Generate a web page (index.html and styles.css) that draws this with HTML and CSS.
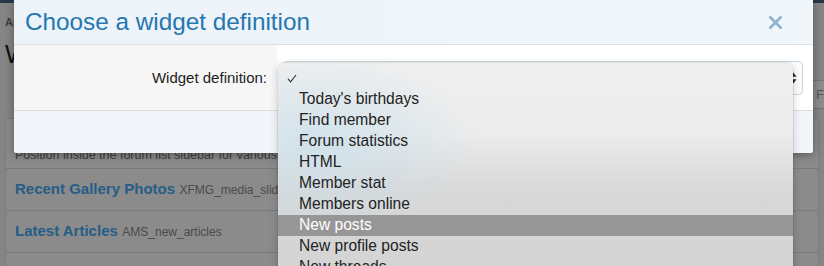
FILE: index.html
```html
<!DOCTYPE html>
<html>
<head>
<meta charset="utf-8">
<link rel="stylesheet" href="styles.css">
</head>
<body>
<div class="page">
  <div class="topbar"></div>
  <div class="crumb">Appearance</div>
  <h1 class="title">Widgets</h1>
  <div class="filter-row"><div class="filter">Filter...</div></div>
  <div class="block">
    <div class="row row-first">
      <div class="row-title">Forum list sidebar</div>
      <div class="row-desc">Position inside the forum list sidebar for various statistics widgets</div>
    </div>
    <div class="row"><span class="row-name">Recent Gallery Photos</span> <span class="row-id">XFMG_media_slider</span></div>
    <div class="row"><span class="row-name">Latest Articles</span> <span class="row-id">AMS_new_articles</span></div>
    <div class="row"><span class="row-name">New threads</span> <span class="row-id">forum_overview_new_threads</span></div>
  </div>
</div>

<div class="modal">
  <div class="m-head">
    <h2 class="m-title">Choose a widget definition</h2>
    <svg class="m-close" width="15" height="15" viewBox="0 0 15 15"><path d="M1.5 1.5 L13.5 13.5 M13.5 1.5 L1.5 13.5" stroke="#8db3d5" stroke-width="2.8" stroke-linecap="butt"/></svg>
  </div>
  <div class="m-row">
    <div class="m-label">Widget definition:</div>
    <div class="m-input">
      <div class="select">
        <svg class="sel-arrows" width="7" height="12" viewBox="0 0 7 12"><path d="M3.5 0.5 L6.5 4.8 L0.5 4.8 Z M3.5 11.5 L6.5 7.2 L0.5 7.2 Z" fill="#2a2a2a"/></svg>
      </div>
    </div>
  </div>
  <div class="m-foot"></div>
</div>

<div class="menu">
  <div class="menu-item menu-check"><svg width="10" height="9" viewBox="0 0 10 9"><path d="M1 4.8 L3.6 7.8 L9 1" fill="none" stroke="#333" stroke-width="1.1"/></svg></div>
  <div class="menu-item">Today's birthdays</div>
  <div class="menu-item">Find member</div>
  <div class="menu-item">Forum statistics</div>
  <div class="menu-item">HTML</div>
  <div class="menu-item">Member stat</div>
  <div class="menu-item">Members online</div>
  <div class="menu-item menu-hl">New posts</div>
  <div class="menu-item">New profile posts</div>
  <div class="menu-item">New threads</div>
</div>
</body>
</html>
```

FILE: styles.css
```css
html, body {
  margin: 0;
  padding: 0;
}
body {
  width: 824px;
  height: 266px;
  overflow: hidden;
  background: #858585;
  font-family: "Liberation Sans", Arial, sans-serif;
  position: relative;
}

/* dimmed background page */
.page {
  padding: 0 5px;
}
.topbar {
  height: 3px;
  margin: 0 -5px;
  background: #27384a;
}
.crumb {
  margin-top: 12px;
  font-size: 11px;
  line-height: 14px;
  font-weight: bold;
  color: #3c3c3c;
}
.title {
  margin: 10px 0 0;
  font-size: 25px;
  line-height: 30px;
  font-weight: normal;
  color: #111;
}
.filter-row {
  display: flex;
  justify-content: flex-end;
  margin-top: 11px;
  margin-right: -180px;
}
.filter {
  width: 182px;
  height: 27px;
  border: 1px solid #747474;
  border-radius: 3px;
  background: #8c8c8c;
  color: #555;
  font-size: 13px;
  line-height: 27px;
  padding-left: 4px;
}
.block {
  margin-top: 9px;
  border: 1px solid #7a7a7a;
  border-bottom: none;
  background: #8b8b8b;
}
.row {
  box-sizing: border-box;
  height: 42px;
  padding: 10px 9px 0;
  line-height: 20px;
  border-bottom: 1px solid #7a7a7a;
  white-space: nowrap;
  overflow: hidden;
}
.row-first {
  height: 50px;
  padding: 8px 9px 0;
}
.row-title {
  font-size: 15px;
  font-weight: bold;
  color: #265a82;
  line-height: 19px;
}
.row-desc {
  font-size: 12.5px;
  line-height: 18px;
  color: #3e3e3e;
}
.row-name {
  font-size: 15px;
  font-weight: bold;
  color: #265d87;
}
.row-id {
  font-size: 12px;
  color: #4a4a4a;
}

/* modal overlay */
.modal {
  position: absolute;
  left: 14px;
  top: 0;
  width: 799px;
  background: #fff;
  box-shadow: 0 2px 10px rgba(0, 0, 0, 0.35);
  border-radius: 0 0 3px 3px;
}
.m-head {
  height: 44px;
  border-bottom: 1px solid #d6e0e8;
  background: linear-gradient(to right, #ecf3f9, #f1f6fa);
  display: flex;
  align-items: center;
  justify-content: space-between;
  padding: 0 30px 0 11px;
}
.m-title {
  margin: 0;
  font-size: 24.3px;
  font-weight: normal;
  color: #2577b1;
  line-height: 28px;
}
.m-close {
  display: block;
}
.m-row {
  display: flex;
  height: 65px;
  border-bottom: 1px solid #d9dde1;
}
.m-label {
  width: 253px;
  padding-right: 10px;
  background: #f6f6f6;
  display: flex;
  align-items: center;
  justify-content: flex-end;
  font-size: 15px;
  color: #1d1d1d;
}
.m-input {
  flex: 1;
  padding: 16px 10px 0 6px;
}
.select {
  height: 32px;
  border: 1px solid #c8d6e1;
  border-radius: 4px;
  background: #fbfcfd;
  display: flex;
  align-items: center;
  justify-content: flex-end;
  padding-right: 5px;
}
.sel-arrows {
  display: block;
}
.m-foot {
  height: 42px;
  background: #f2f6fa;
  border-radius: 0 0 3px 3px;
}

/* native select popup */
.menu {
  position: absolute;
  left: 278px;
  top: 63px;
  width: 515px;
  height: 215px;
  padding-top: 5px;
  box-sizing: border-box;
  border-radius: 6px 6px 0 0;
  background:
    radial-gradient(ellipse 160px 90px at 40px 80px, rgba(200, 224, 236, 0.75), rgba(200, 224, 236, 0) 100%),
    linear-gradient(to bottom, #efefef 0, #ececec 70px, #dadada 120px, #d6d6d6 150px, #d4d4d4 100%);
  box-shadow: 0 0 0 1px rgba(0, 0, 0, 0.07), 0 3px 10px rgba(0, 0, 0, 0.18);
  font-size: 15.6px;
  color: #232323;
}
.menu-item {
  height: 21px;
  line-height: 20px;
  padding-left: 21px;
  white-space: nowrap;
}
.menu-check {
  padding-left: 9px;
  display: flex;
  align-items: center;
}
.menu-check svg {
  display: block;
}
.menu-hl {
  background: #969696;
  color: #fff;
}
```
